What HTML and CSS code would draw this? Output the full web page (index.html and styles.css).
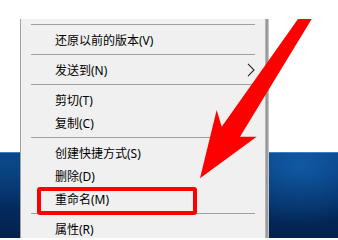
FILE: index.html
```html
<!DOCTYPE html>
<html lang="zh-CN">
<head>
<meta charset="utf-8">
<title>右键菜单</title>
<link rel="stylesheet" href="styles.css">
</head>
<body>
<div class="screen">
  <div class="desk-top"></div>
  <div class="desk-wallpaper"></div>
  <div class="menu">
    <div class="menu-body">
      <div class="sep"></div>
      <div class="item">还原以前的版本(V)</div>
      <div class="sep"></div>
      <div class="item has-sub">
        <span>发送到(N)</span>
        <svg class="chev" width="8" height="14" viewBox="0 0 8 14"><polyline points="1,0.8 7,7 1,13.2" fill="none" stroke="#2a2a2a" stroke-width="1.1"/></svg>
      </div>
      <div class="sep"></div>
      <div class="item">剪切(T)</div>
      <div class="item">复制(C)</div>
      <div class="sep"></div>
      <div class="item">创建快捷方式(S)</div>
      <div class="item">删除(D)</div>
      <div class="item marked">重命名(M)<span class="mark"></span></div>
      <div class="sep"></div>
      <div class="item">属性(R)</div>
    </div>
    <div class="menu-shadow"></div>
  </div>
  <svg class="arrow" width="338" height="238" viewBox="0 0 338 238">
    <polygon points="298,19 311.7,19 240,136.7 256.7,136.7 200,178.3 216.7,110 221.7,126.7" fill="#ff0000"/>
  </svg>
</div>
</body>
</html>
```

FILE: styles.css
```css
html, body {
  margin: 0;
  padding: 0;
  background: #ffffff;
}

.screen {
  position: relative;
  width: 338px;
  height: 238px;
  overflow: hidden;
  display: flex;
  flex-direction: column;
  font-family: "Noto Sans", "Noto Sans CJK SC", sans-serif;
}

.desk-top {
  height: 152px;
  background: #ffffff;
}

.desk-wallpaper {
  flex: 1;
  border-top: 1px solid #3d7fc0;
  background:
    radial-gradient(ellipse 90px 60px at 300px 12px, rgba(20, 100, 180, 0.75), rgba(20, 100, 180, 0) 100%),
    radial-gradient(ellipse 60px 50px at 8px 8px, rgba(15, 80, 150, 0.6), rgba(15, 80, 150, 0) 100%),
    linear-gradient(to bottom, #073e7a 0%, #042d62 50%, #02224e 100%);
}

.menu {
  position: absolute;
  left: 20px;
  top: 19px;
  width: 249px;
  height: 219px;
  display: flex;
}

.menu-body {
  flex: 1;
  background: #f0f0f0;
  border-left: 1px solid #a0a0a0;
  padding-top: 2px;
  color: #000000;
  font-size: 12px;
}

.menu-shadow {
  width: 4px;
  background: linear-gradient(to right, #c6c6c6 0%, #8e8e8e 45%, #a6a6a6 70%, #dadada 100%);
}

.sep {
  height: 1px;
  margin: 3px 10px 3px 10px;
  background: #a0a0a0;
}

.item {
  position: relative;
  height: 23px;
  display: flex;
  align-items: center;
  justify-content: space-between;
  padding: 0 10px 0 34px;
  white-space: nowrap;
}

.chev {
  display: block;
}

.mark {
  position: absolute;
  left: 16px;
  top: 0;
  width: 160px;
  height: 28px;
  box-sizing: border-box;
  border: 4px solid #ff0000;
  border-radius: 3px;
}

.arrow {
  position: absolute;
  left: 0;
  top: 0;
}
```
